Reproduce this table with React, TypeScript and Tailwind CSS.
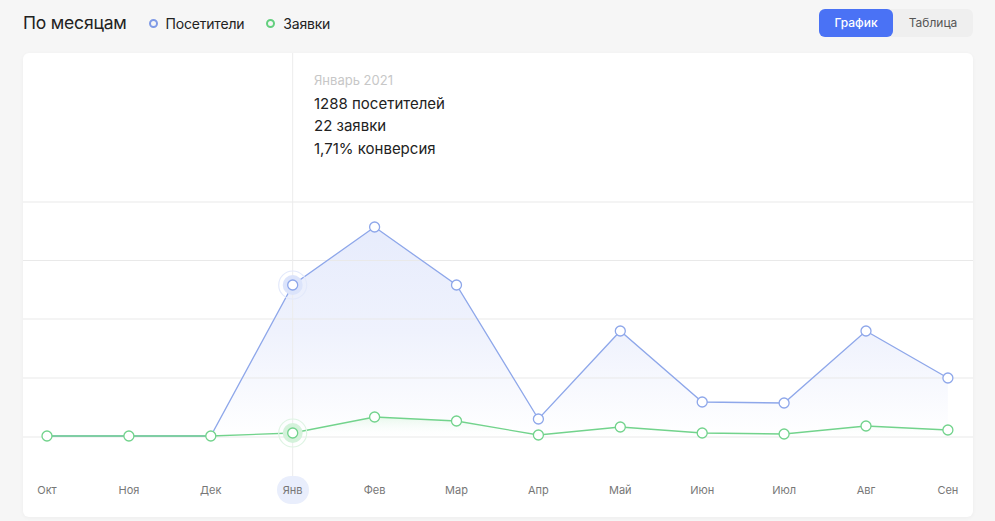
import React from "react"

const months = ["Окт", "Ноя", "Дек", "Янв", "Фев", "Мар", "Апр", "Май", "Июн", "Июл", "Авг", "Сен"]
const visitors = [383, 383, 383, 232, 174, 232, 366, 278, 349, 350, 278, 325]
const requests = [383, 383, 383, 380, 364, 368, 382, 374, 380, 381, 373, 377]
const grid = [149, 207.5, 266, 325, 384]
const active = 3

const xAt = (i: number) => 24 + i * 81.9

function linePath(ys: number[]) {
  return ys.map((y, i) => `${i === 0 ? "M" : "L"}${xAt(i)},${y}`).join(" ")
}

function areaPath(ys: number[]) {
  return `${linePath(ys)} L${xAt(ys.length - 1)},384 L${xAt(0)},384 Z`
}

function Chart() {
  return (
    <svg width="950" height="464" className="block">
      <defs>
        <linearGradient id="blueFill" x1="0" y1="174" x2="0" y2="384" gradientUnits="userSpaceOnUse">
          <stop offset="0" stopColor="#e7ecfc" />
          <stop offset="0.5" stopColor="#eff2fd" />
          <stop offset="1" stopColor="#ffffff" />
        </linearGradient>
        <linearGradient id="greenFill" x1="0" y1="362" x2="0" y2="384" gradientUnits="userSpaceOnUse">
          <stop offset="0" stopColor="#e3f7e8" />
          <stop offset="1" stopColor="#ffffff" stopOpacity="0" />
        </linearGradient>
      </defs>
      <path d={areaPath(visitors)} fill="url(#blueFill)" />
      <path d={areaPath(requests)} fill="url(#greenFill)" />

      {grid.map((y) => (
        <line key={y} x1="0" x2="950" y1={y} y2={y} stroke="#e9e9e9" strokeWidth="1" />
      ))}
      <line x1={xAt(active)} x2={xAt(active)} y1="0" y2="423" stroke="#ececec" strokeWidth="1" />

      <path d={linePath(visitors)} fill="none" stroke="#8ea7ea" strokeWidth="1.3" />
      <path d={linePath(requests)} fill="none" stroke="#72d38c" strokeWidth="1.3" />

      <circle cx={xAt(active)} cy={visitors[active]} r="14" fill="none" stroke="#e3e9fb" strokeWidth="1.2" />
      <circle cx={xAt(active)} cy={visitors[active]} r="10" fill="#dce4fb" />
      <circle cx={xAt(active)} cy={requests[active]} r="14" fill="none" stroke="#dff4e4" strokeWidth="1.2" />
      <circle cx={xAt(active)} cy={requests[active]} r="10" fill="#d4f2db" />

      {visitors.map((y, i) =>
        i < 3 ? null : (
          <circle key={"v" + i} cx={xAt(i)} cy={y} r="5" fill="#ffffff" stroke="#8ea7ea" strokeWidth="1.3" />
        )
      )}
      {requests.map((y, i) => (
        <circle key={"r" + i} cx={xAt(i)} cy={y} r="5" fill="#ffffff" stroke="#72d38c" strokeWidth="1.3" />
      ))}
    </svg>
  )
}

export default function App() {
  return (
    <div className="w-[995px] h-[521px] bg-[#f6f6f6] overflow-hidden font-['Inter',sans-serif]">
      <div className="flex justify-between pl-[23px] pr-[22px] pt-[9px] h-[53px] items-start">
        <div className="flex items-center h-[28px]">
          <h2 className="text-[17.5px] text-[#222] mr-[22px] tracking-[-0.2px]">По месяцам</h2>
          <span className="w-[9px] h-[9px] rounded-full border-2 border-[#7f9ae6] mr-[8px]" />
          <span className="text-[14px] text-[#222] mr-[22px] tracking-[-0.2px]">Посетители</span>
          <span className="w-[9px] h-[9px] rounded-full border-2 border-[#63cf7e] mr-[8px]" />
          <span className="text-[14px] text-[#222] tracking-[-0.2px]">Заявки</span>
        </div>
        <div className="flex h-[28px] rounded-md bg-[#efefef] text-[12px]">
          <button className="w-[74px] rounded-md bg-[#4a72f5] text-white font-medium">График</button>
          <button className="w-[80px] text-[#555]">Таблица</button>
        </div>
      </div>

      <div className="relative ml-[23px] w-[950px] h-[464px] bg-white rounded-md shadow-[0_1px_4px_rgba(0,0,0,0.04)] overflow-hidden">
        <Chart />

        <div className="absolute left-[291px] top-[16px] text-[15px] leading-[22.5px] text-[#222]">
          <div className="text-[13px] text-[#c7c7c7] mb-[1px]">Январь 2021</div>
          <div>1288 посетителей</div>
          <div>22 заявки</div>
          <div>1,71% конверсия</div>
        </div>

        <div className="absolute left-0 top-[423px] w-full h-[28px]">
          {months.map((m, i) => (
            <span
              key={m}
              style={{ left: 24 + i * 81.9 - 16 }}
              className={`absolute top-0 w-[32px] h-[28px] flex items-center justify-center rounded-full text-[11px] text-[#777] ${
                i === active ? "bg-[#e9eefc]" : ""
              }`}
            >
              {m}
            </span>
          ))}
        </div>
      </div>
    </div>
  )
}
